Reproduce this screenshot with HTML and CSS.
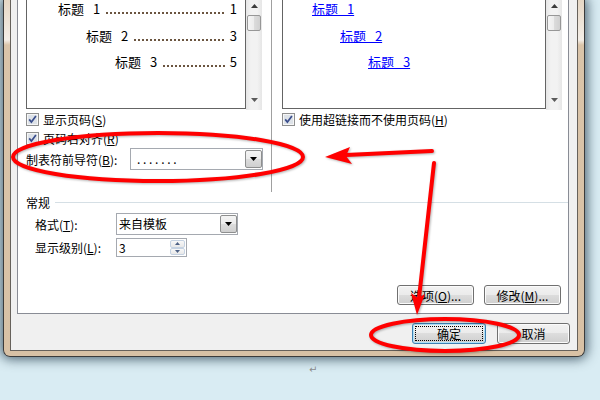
FILE: index.html
```html
<!DOCTYPE html>
<html>
<head>
  <meta charset="utf-8">
  <title>索引和目录</title>
  <link rel="stylesheet" href="styles.css">
</head>
<body>
  <div class="screen">
    <div class="dialog">
      <div class="client">
        <div class="page">
          <div class="top">
            <div class="col-print">
              <div class="preview">
                <div class="preview-box print-box">
                  <div class="toc-row lvl1"><span class="toc-title">标题 1</span><span class="leader"></span><span class="pg">1</span></div>
                  <div class="toc-row lvl2"><span class="toc-title">标题 2</span><span class="leader"></span><span class="pg">3</span></div>
                  <div class="toc-row lvl3"><span class="toc-title">标题 3</span><span class="leader"></span><span class="pg">5</span></div>
                </div>
                <div class="vscroll">
                  <div class="sb-arrow"><svg width="7" height="4" viewBox="0 0 7 4"><path d="M0 4L3.5 0L7 4z" fill="#3c3c3c"/></svg></div>
                  <div class="thumb"></div>
                  <div class="sb-arrow sb-down"><svg width="7" height="4" viewBox="0 0 7 4"><path d="M0 0h7L3.5 4z" fill="#5a5a5a"/></svg></div>
                </div>
              </div>
              <div class="check">
                <svg width="13" height="13" viewBox="0 0 13 13"><rect x="0.5" y="0.5" width="12" height="12" fill="#f6f6f6" stroke="#8e8f8f"/><rect x="2" y="2" width="9" height="9" fill="#dde2e8"/><path d="M3.2 6.4L5.4 9.1L9.9 3.1" fill="none" stroke="#3a4e8c" stroke-width="1.7"/></svg>
                <span>显示页码(<u>S</u>)</span>
              </div>
              <div class="check">
                <svg width="13" height="13" viewBox="0 0 13 13"><rect x="0.5" y="0.5" width="12" height="12" fill="#f6f6f6" stroke="#8e8f8f"/><rect x="2" y="2" width="9" height="9" fill="#dde2e8"/><path d="M3.2 6.4L5.4 9.1L9.9 3.1" fill="none" stroke="#3a4e8c" stroke-width="1.7"/></svg>
                <span>页码右对齐(<u>R</u>)</span>
              </div>
              <div class="leader-row">
                <span class="leader-label">制表符前导符(<u>B</u>):</span>
                <div class="combo leader-combo">
                  <span class="combo-text dots">.......</span>
                  <span class="combo-btn"><svg width="7" height="4" viewBox="0 0 7 4"><path d="M0 0h7L3.5 4z" fill="#000"/></svg></span>
                </div>
              </div>
            </div>
            <div class="col-web">
              <div class="preview">
                <div class="preview-box web-box">
                  <div class="web-row lvl1"><a class="toc-link">标题 1</a></div>
                  <div class="web-row lvl2"><a class="toc-link">标题 2</a></div>
                  <div class="web-row lvl3"><a class="toc-link">标题 3</a></div>
                </div>
                <div class="vscroll">
                  <div class="sb-arrow"><svg width="7" height="4" viewBox="0 0 7 4"><path d="M0 4L3.5 0L7 4z" fill="#3c3c3c"/></svg></div>
                  <div class="thumb"></div>
                  <div class="sb-arrow sb-down"><svg width="7" height="4" viewBox="0 0 7 4"><path d="M0 0h7L3.5 4z" fill="#5a5a5a"/></svg></div>
                </div>
              </div>
              <div class="check">
                <svg width="13" height="13" viewBox="0 0 13 13"><rect x="0.5" y="0.5" width="12" height="12" fill="#f6f6f6" stroke="#8e8f8f"/><rect x="2" y="2" width="9" height="9" fill="#dde2e8"/><path d="M3.2 6.4L5.4 9.1L9.9 3.1" fill="none" stroke="#3a4e8c" stroke-width="1.7"/></svg>
                <span>使用超链接而不使用页码(<u>H</u>)</span>
              </div>
            </div>
          </div>

          <div class="group-title"><span>常规</span><span class="group-line"></span></div>
          <div class="field-row">
            <span class="field-label">格式(<u>T</u>):</span>
            <div class="combo format-combo">
              <span class="combo-text">来自模板</span>
              <span class="combo-btn"><svg width="7" height="4" viewBox="0 0 7 4"><path d="M0 0h7L3.5 4z" fill="#000"/></svg></span>
            </div>
          </div>
          <div class="field-row level-row">
            <span class="field-label">显示级别(<u>L</u>):</span>
            <div class="spin">
              <span class="spin-text">3</span>
              <span class="spin-btns">
                <span class="spin-btn"><svg width="5" height="3" viewBox="0 0 5 3"><path d="M0 3L2.5 0L5 3z" fill="#4d6185"/></svg></span>
                <span class="spin-btn"><svg width="5" height="3" viewBox="0 0 5 3"><path d="M0 0h5L2.5 3z" fill="#4d6185"/></svg></span>
              </span>
            </div>
          </div>

          <div class="page-buttons">
            <button class="btn">选项(<u>O</u>)...</button>
            <button class="btn">修改(<u>M</u>)...</button>
          </div>
        </div>

        <div class="footer">
          <button class="btn btn-default"><span class="focus">确定</span></button>
          <button class="btn btn-cancel">取消</button>
        </div>
      </div>
    </div>
    <div class="para-mark">↵</div>

    <svg class="marks" width="600" height="400" viewBox="0 0 600 400">
      <g fill="none" stroke="#f00" stroke-width="4">
        <ellipse cx="158" cy="157" rx="145" ry="24"/>
        <ellipse cx="445" cy="335" rx="74" ry="16"/>
        <path d="M432 151L346 155" stroke-linecap="round"/>
        <path d="M434 163L419 298" stroke-linecap="round"/>
      </g>
      <path d="M325 157L350 147L346 156L352 164z" fill="#f00"/>
      <path d="M417 315L411 293L418 298L425 294z" fill="#f00"/>
    </svg>
  </div>
</body>
</html>
```

FILE: styles.css
```css
html, body { margin: 0; }
body { background: #d9ecf3; font-family: "Noto Sans CJK SC", "Noto Sans", sans-serif; font-size: 12px; color: #000; }
u { text-decoration: underline; }

.screen { position: relative; width: 600px; height: 400px; overflow: hidden; }

/* window frame */
.dialog { margin-left: 3px; width: 582px; box-sizing: border-box; padding: 0 6px 5px 6px; border: 1px solid #3b3b3b; border-top: none; border-radius: 0 0 7px 7px; background: linear-gradient(#e6d7c4 0, #f4eee7 40px, #dac4a9 45px, #d8c1a5 100%); box-shadow: 0 0 12px 2px rgba(25, 50, 65, 0.75); }
.client { background: #f0f0f0; border: 1px solid #66615b; border-top: none; }

/* tab page */
.page { margin: 0 8px 0 6px; background: #fff; border: 1px solid #898c95; border-top: none; padding-bottom: 8px; }
.top { display: flex; height: 192px; }
.col-print { width: 253px; box-sizing: border-box; padding-left: 8px; }
.col-web { width: 297px; box-sizing: border-box; border-left: 1px solid #a0a0a0; padding-left: 10px; }

.preview { display: flex; height: 110px; }
.preview-box { box-sizing: border-box; height: 109px; background: #fff; border: 1px solid #646464; border-top: none; }
.print-box { width: 220px; padding-right: 8px; }
.web-box { width: 264px; }

.toc-row { display: flex; height: 17px; line-height: 17px; margin-bottom: 9.5px; font-size: 13px; }
.toc-title { word-spacing: 6px; }
.leader { flex: 1; margin: 0 5px 0 6px; background: linear-gradient(90deg, #6b5540 2px, transparent 2px) 0 12px / 4px 1.5px repeat-x; }
.print-box .lvl1 { padding-left: 31px; }
.print-box .lvl2 { padding-left: 59px; }
.print-box .lvl3 { padding-left: 88px; }

.web-row { height: 17px; line-height: 17px; margin-bottom: 9.5px; font-size: 13px; }
.toc-link { color: #0000ff; text-decoration: underline; word-spacing: 6px; }
.web-box .lvl1 { padding-left: 29px; }
.web-box .lvl2 { padding-left: 57px; }
.web-box .lvl3 { padding-left: 85px; }

.vscroll { width: 16px; height: 110px; display: flex; flex-direction: column; align-items: center; background: linear-gradient(90deg, #e6e6e6, #f2f2f2 30%, #f2f2f2 70%, #e6e6e6); }
.sb-arrow { height: 12px; display: flex; align-items: center; justify-content: center; }
.sb-down { margin-top: auto; margin-bottom: 4px; }
.thumb { width: 14px; height: 16px; margin-top: 3px; box-sizing: border-box; border: 1px solid #979797; border-radius: 2px; background: linear-gradient(90deg, #f5f5f5, #ececec 50%, #dcdcdc 50%, #d0d0d0); }

.check { display: flex; align-items: center; gap: 4px; height: 19px; line-height: 17px; }
.check svg { flex: none; }

.leader-row { display: flex; align-items: center; height: 22px; }
.leader-label { width: 104px; }

/* combo boxes */
.combo { display: flex; box-sizing: border-box; height: 22px; background: #fff; border: 1px solid #a5a9b0; }
.combo-text { flex: 1; line-height: 20px; padding-left: 2px; }
.combo-btn { width: 15px; border: 1px solid #8e8f8f; border-radius: 2px; margin: 1px 0 1px 0; display: flex; align-items: center; justify-content: center; background: linear-gradient(#f4f4f4, #ebebeb 50%, #dddddd 50%, #cfcfcf); }
.leader-combo { width: 133px; }
.dots { padding-left: 6px; letter-spacing: 2.7px; }
.format-combo { width: 122px; }

/* general group */
.group-title { display: flex; align-items: center; height: 17px; margin-top: 2px; padding-left: 8px; }
.group-line { flex: 1; height: 1px; margin-left: 5px; background: #d5dfe5; }
.field-row { display: flex; align-items: center; height: 22px; margin-top: 2px; padding-left: 17px; }
.field-label { width: 81px; }
.level-row { height: 19px; margin-top: 3px; }

.spin { display: flex; box-sizing: border-box; width: 71px; height: 19px; background: #fff; border: 1px solid #a5a9b0; }
.spin-text { flex: 1; line-height: 17px; padding-left: 2px; }
.spin-btns { width: 15px; display: flex; flex-direction: column; margin: 1px 1px 1px 0; }
.spin-btn { flex: 1; display: flex; align-items: center; justify-content: center; border: 1px solid #c5d2e2; border-radius: 2px; background: linear-gradient(#f8f8f8, #e8e8e8); }

/* buttons */
.page-buttons { display: flex; justify-content: flex-end; gap: 10px; margin-top: 28px; padding-right: 7px; }
.btn { box-sizing: border-box; width: 77px; height: 20px; padding: 0; border: 1px solid #707070; border-radius: 3px; background: linear-gradient(#f2f2f2, #ebebeb 50%, #dddddd 50%, #cfcfcf); box-shadow: inset 0 0 0 1px #fbfbfb; font: inherit; color: #000; display: flex; align-items: center; justify-content: center; }
.footer { display: flex; justify-content: flex-end; gap: 11px; padding: 9px 7px 6px 0; }
.footer .btn { height: 21px; }
.btn-default { width: 74px; padding: 2px 2px 2px 2px; border-color: #3c7fb1; box-shadow: inset 0 0 0 1px #aee0f8; align-items: stretch; }
.btn-default .focus { flex: 1; display: flex; align-items: center; justify-content: center; border: 1px dotted #000; }
.btn-cancel { width: 73px; }

.para-mark { margin-top: 8px; padding-left: 309px; font-family: "DejaVu Sans", sans-serif; font-size: 10px; line-height: 10px; color: #8a8a8a; }

/* red annotations drawn over the screenshot */
.marks { position: absolute; left: 0; top: 0; pointer-events: none; filter: drop-shadow(1px 1px 1px rgba(0, 0, 0, 0.3)); }
```
